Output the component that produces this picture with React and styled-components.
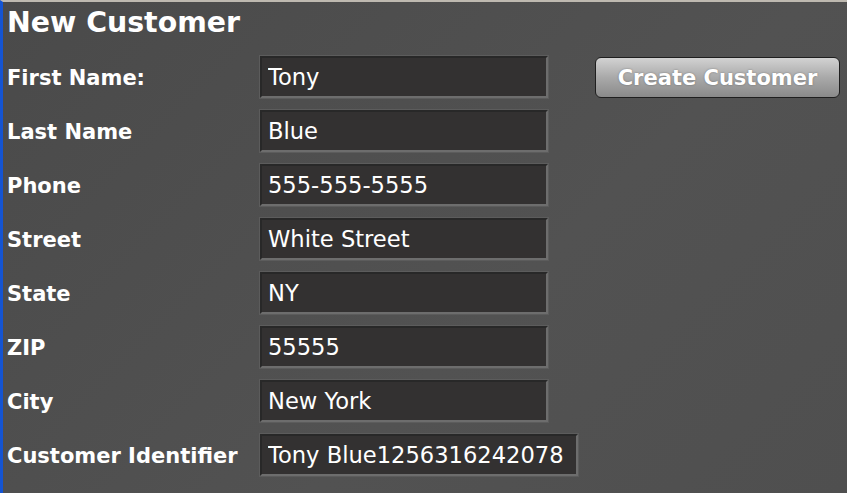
import React from 'react';
import styled, { createGlobalStyle } from 'styled-components';

const GlobalStyle = createGlobalStyle`
  html, body {
    margin: 0;
    padding: 0;
    background: #4e4e4e;
  }
`;

const Page = styled.div`
  box-sizing: border-box;
  width: 847px;
  height: 493px;
  border-top: 2px solid #beb9b0;
  border-left: 3px solid #1454d2;
  background: linear-gradient(135deg, #4a4a4a 0%, #525252 60%, #4f4f4f 100%);
  padding: 3px 7px 0 4px;
  font-family: "DejaVu Sans", Verdana, sans-serif;
  color: #fff;
`;

const Title = styled.h1`
  margin: 0;
  font-size: 28.4px;
  font-weight: bold;
  line-height: 36px;
`;

const Form = styled.div`
  display: grid;
  grid-template-columns: 253px 288px 1fr;
  grid-auto-rows: 42px;
  row-gap: 12px;
  margin-top: 15px;
  align-items: center;
`;

const Label = styled.label`
  grid-column: 1;
  padding-top: 1px;
  font-size: 21px;
  font-weight: bold;
  white-space: nowrap;
`;

const Field = styled.input`
  grid-column: 2;
  box-sizing: border-box;
  width: ${({ $wide }) => ($wide ? '318px' : '288px')};
  height: 42px;
  margin: 0;
  padding: 0 6px;
  background: #333131;
  border: 2px solid;
  border-color: #282828 #6d6d6d #6d6d6d #282828;
  box-shadow: 0 0 0 1px #5c5c5c;
  color: #fff;
  font-family: inherit;
  font-size: 22.6px;
  outline: none;
`;

const CreateButton = styled.button`
  grid-column: 3;
  grid-row: 1;
  justify-self: end;
  width: 245px;
  height: 41px;
  margin-top: 1px;
  border: 1px solid #1f1f1f;
  border-radius: 6px;
  background: linear-gradient(#d2d2d2 0%, #a9a9a9 50%, #8a8a8a 100%);
  color: #fff;
  font-family: inherit;
  font-size: 21px;
  font-weight: bold;
  text-shadow: 0 0 2px rgba(0, 0, 0, 0.35);
  cursor: pointer;
`;

const fields = [
  ['First Name:', 'Tony'],
  ['Last Name', 'Blue'],
  ['Phone', '555-555-5555'],
  ['Street', 'White Street'],
  ['State', 'NY'],
  ['ZIP', '55555'],
  ['City', 'New York'],
  ['Customer Identifier', 'Tony Blue1256316242078'],
];

export default function App() {
  return (
    <>
      <GlobalStyle />
      <Page>
        <Title>New Customer</Title>
        <Form>
          {fields.map(([label, value], i) => (
            <React.Fragment key={label}>
              <Label>{label}</Label>
              <Field
                defaultValue={value}
                readOnly
                $wide={i === fields.length - 1}
              />
            </React.Fragment>
          ))}
          <CreateButton>Create Customer</CreateButton>
        </Form>
      </Page>
    </>
  );
}
